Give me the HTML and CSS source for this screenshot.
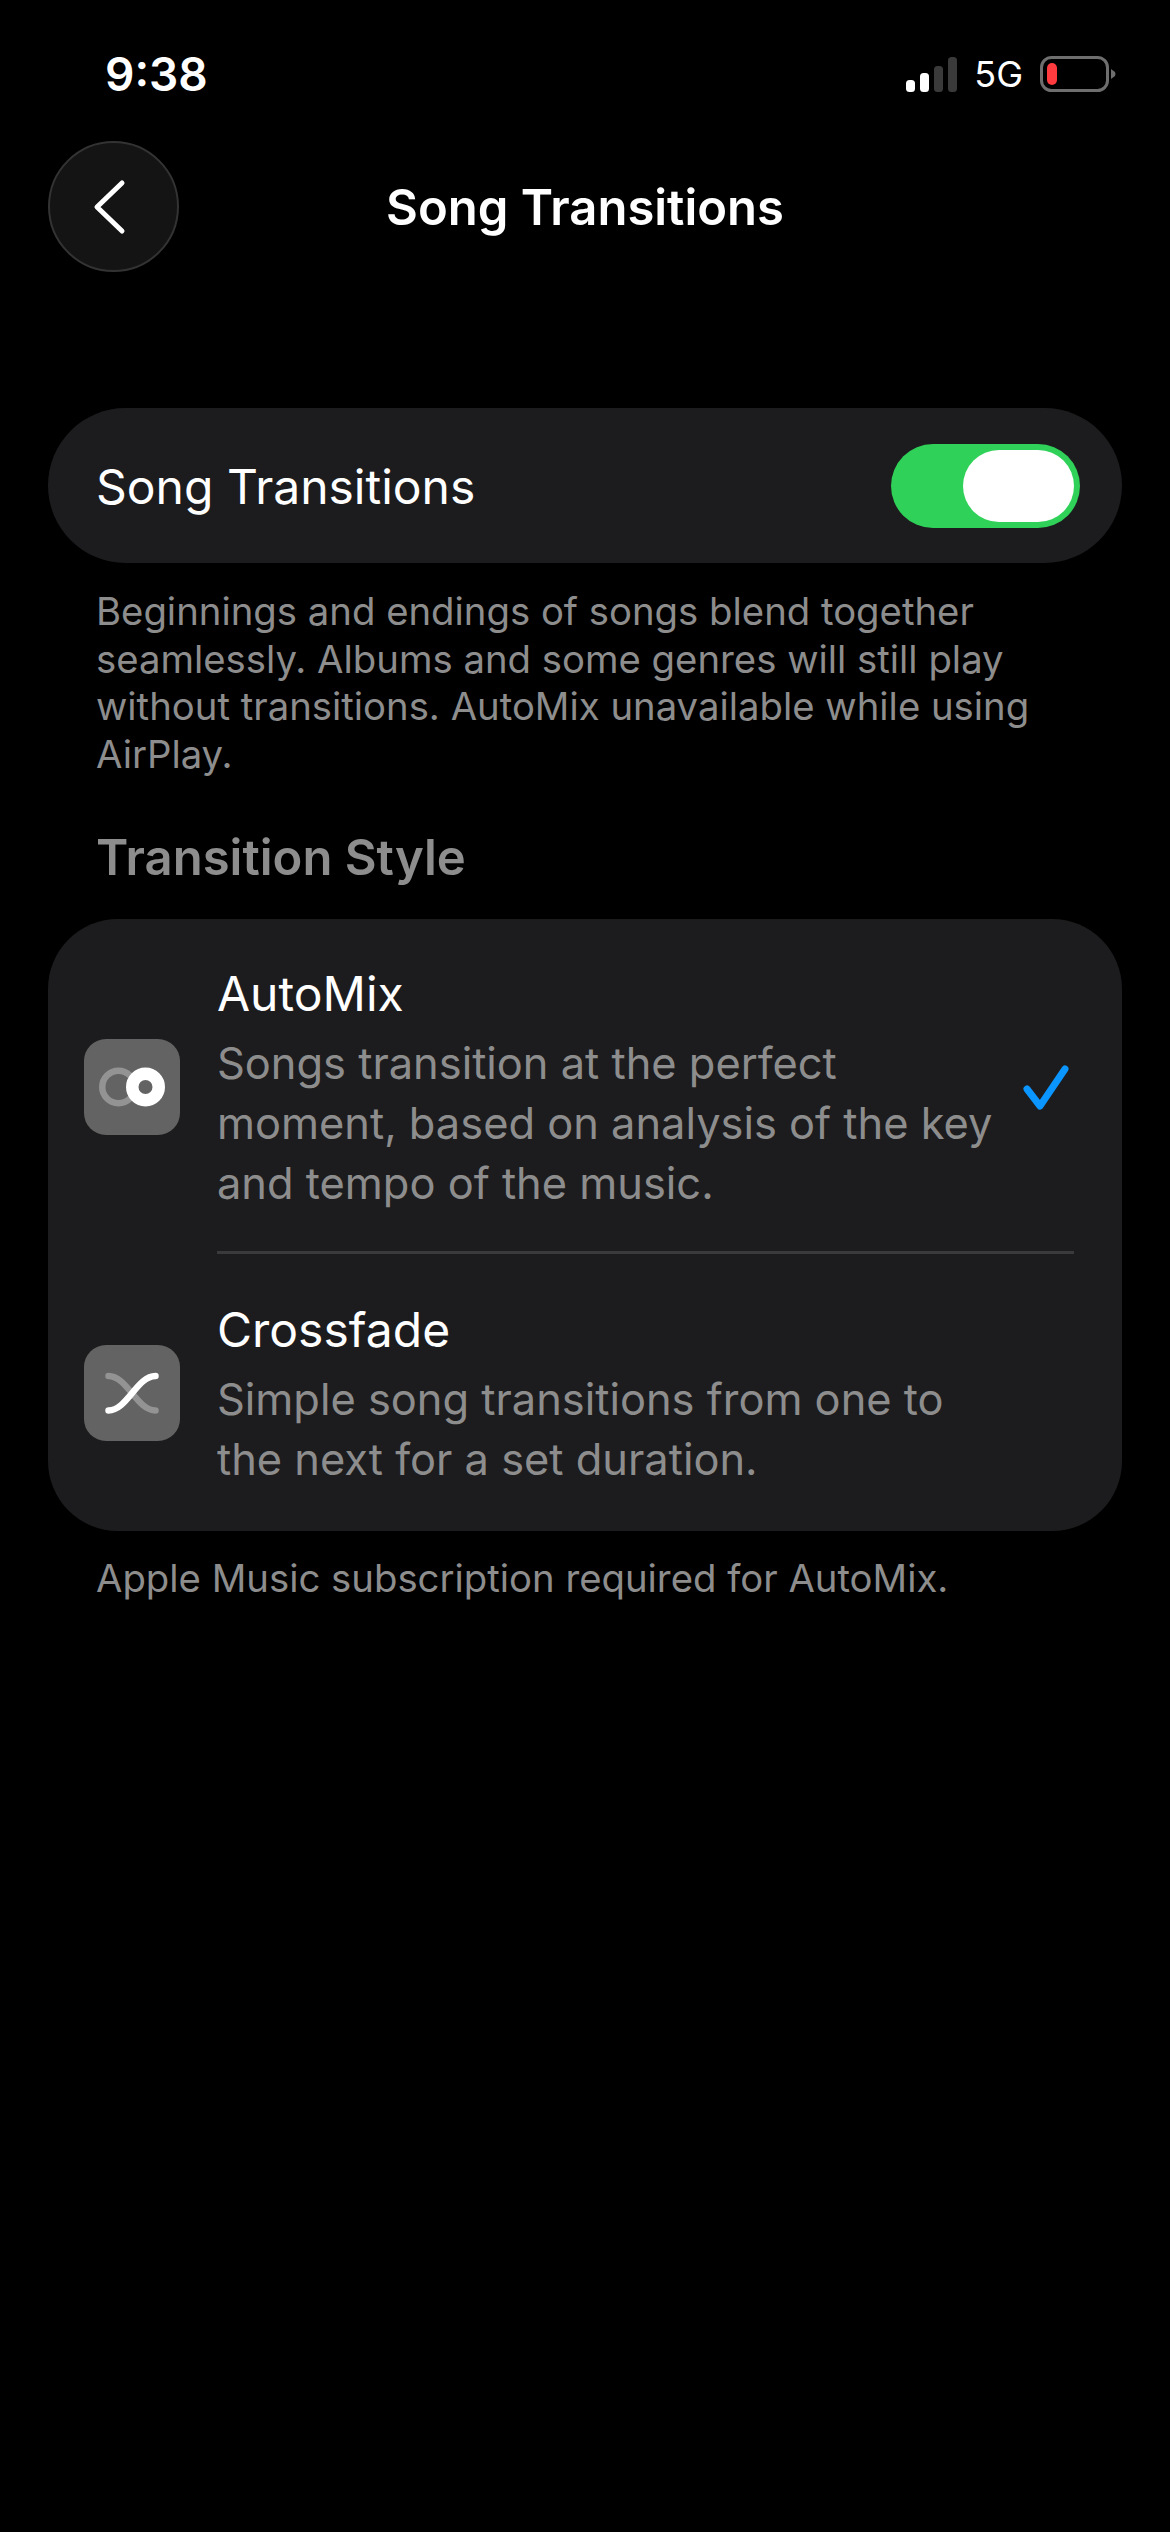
FILE: index.html
```html
<!DOCTYPE html>
<html lang="en">
<head>
    <meta charset="UTF-8">
    <meta name="viewport" content="width=device-width, initial-scale=1.0">
    <title>Song Transitions</title>
    <link rel="stylesheet" href="styles.css">
</head>
<body>

    <div class="status-bar">
        <span class="time">9:38</span>
        <div class="status-right">
            <svg class="signal" width="51" height="35" viewBox="0 0 51 35">
                <rect x="0" y="23" width="9" height="12" rx="3.5" fill="#fff"/>
                <rect x="14" y="16" width="9" height="19" rx="3.5" fill="#fff"/>
                <rect x="28" y="9" width="9" height="26" rx="3.5" fill="#3a3a3a"/>
                <rect x="42" y="0" width="9" height="35" rx="3.5" fill="#3a3a3a"/>
            </svg>
            <span class="network">5G</span>
            <svg class="battery" width="76" height="36" viewBox="0 0 76 36">
                <rect x="1.5" y="1.5" width="66" height="33" rx="10" fill="none" stroke="#6e6e6e" stroke-width="3"/>
                <rect x="7" y="7" width="10" height="22" rx="5" fill="#ff3b40"/>
                <path d="M71 13 L75 16 Q76 18 75 20 L71 23 Z" fill="#6e6e6e"/>
            </svg>
        </div>
    </div>

    <div class="nav-bar">
        <button class="back-btn">
            <svg width="34" height="56" viewBox="0 0 34 56">
                <path d="M29 4 L4 28 L29 52" fill="none" stroke="#fff" stroke-width="5" stroke-linecap="round" stroke-linejoin="round"/>
            </svg>
        </button>
        <h1 class="nav-title">Song Transitions</h1>
    </div>

    <div class="content">
        <div class="toggle-card">
            <span class="toggle-label">Song Transitions</span>
            <div class="toggle">
                <div class="toggle-thumb"></div>
            </div>
        </div>

        <p class="note note-top">Beginnings and endings of songs blend together seamlessly. Albums and some genres will still play without transitions. AutoMix unavailable while using AirPlay.</p>

        <h2 class="section-title">Transition Style</h2>

        <div class="style-card">
            <div class="style-row row-automix">
                <div class="style-icon">
                    <svg width="66" height="42" viewBox="0 0 66 42">
                        <circle cx="19.5" cy="21" r="16.25" fill="none" stroke="#939393" stroke-width="6.5"/>
                        <circle cx="46.5" cy="21" r="13.25" fill="none" stroke="#fff" stroke-width="12.5"/>
                    </svg>
                </div>
                <div class="style-text">
                    <div class="style-name">AutoMix</div>
                    <div class="style-desc">Songs transition at the perfect<br>moment, based on analysis of the key<br>and tempo of the music.</div>
                </div>
                <svg class="check" width="48" height="48" viewBox="0 0 48 48">
                    <path d="M5 24 L18 41 L43 4" fill="none" stroke="#0a95ff" stroke-width="7" stroke-linecap="round" stroke-linejoin="round"/>
                </svg>
            </div>
            <div class="style-row row-crossfade">
                <div class="style-icon">
                    <svg width="54" height="42" viewBox="0 0 54 42">
                        <path d="M3.5 4 C22 4 32 38.5 50.5 38.5" fill="none" stroke="#939393" stroke-width="6.5" stroke-linecap="round"/>
                        <path d="M3.5 38.5 C22 38.5 32 4 50.5 4" fill="none" stroke="#fff" stroke-width="6.5" stroke-linecap="round"/>
                    </svg>
                </div>
                <div class="style-text">
                    <div class="style-name">Crossfade</div>
                    <div class="style-desc">Simple song transitions from one to<br>the next for a set duration.</div>
                </div>
            </div>
        </div>

        <p class="note note-bottom">Apple Music subscription required for AutoMix.</p>
    </div>

</body>
</html>
```

FILE: styles.css
```css
body {
    margin: 0;
    width: 1170px;
    height: 2532px;
    overflow: hidden;
    background: #000;
    color: #fff;
    font-family: Inter, "Liberation Sans", sans-serif;
}

.status-bar {
    height: 141px;
    box-sizing: border-box;
    padding: 49px 54px 0 105px;
    display: flex;
    justify-content: space-between;
    align-items: flex-start;
}

.time {
    font-size: 46px;
    line-height: 50px;
    font-weight: 600;
}

.status-right {
    display: flex;
    align-items: center;
    height: 50px;
}

.signal {
    margin-right: 17px;
}

.network {
    font-size: 36px;
    font-weight: 400;
    margin-right: 17px;
}

.nav-bar {
    position: relative;
    height: 131px;
    padding-left: 48px;
    display: flex;
    align-items: center;
}

.back-btn {
    width: 131px;
    height: 131px;
    padding: 0 8px 0 0;
    border-radius: 50%;
    border: 2px solid #333;
    background: #141414;
    display: flex;
    align-items: center;
    justify-content: center;
}

.nav-title {
    position: absolute;
    left: 0;
    right: 0;
    margin: 0;
    padding-top: 2px;
    text-align: center;
    font-size: 49px;
    font-weight: 600;
}

.content {
    padding: 136px 48px 0;
}

.toggle-card {
    height: 155px;
    box-sizing: border-box;
    padding: 0 42px 0 48px;
    border-radius: 78px;
    background: #1c1c1e;
    display: flex;
    align-items: center;
    justify-content: space-between;
}

.toggle-label {
    font-size: 48px;
    padding-top: 2px;
}

.toggle {
    width: 189px;
    height: 84px;
    box-sizing: border-box;
    padding: 6px;
    border-radius: 42px;
    background: #30d158;
    display: flex;
    justify-content: flex-end;
}

.toggle-thumb {
    width: 111px;
    height: 72px;
    border-radius: 36px;
    background: #fff;
}

.note {
    margin: 0;
    padding: 0 48px;
    font-size: 38.3px;
    line-height: 47.6px;
    color: #8d8d8d;
}

.note-top {
    margin-top: 25px;
}

.section-title {
    margin: 50px 0 0;
    padding: 0 48px;
    font-size: 49px;
    line-height: 60px;
    font-weight: 600;
    color: #8d8d8d;
}

.style-card {
    margin-top: 31px;
    height: 612px;
    border-radius: 70px;
    background: #1c1c1e;
    display: flex;
    flex-direction: column;
    overflow: hidden;
}

.style-row {
    display: flex;
    align-items: center;
    position: relative;
}

.row-automix {
    height: 335px;
}

.row-crossfade {
    height: 277px;
}

/* divider only spans the text column */
.row-automix::after {
    content: "";
    position: absolute;
    left: 169px;
    right: 48px;
    bottom: 0;
    height: 3px;
    background: #3a3a3c;
}

.style-icon {
    width: 96px;
    height: 96px;
    margin: 0 37px 0 36px;
    flex-shrink: 0;
    border-radius: 22px;
    background: #636363;
    display: flex;
    align-items: center;
    justify-content: center;
}

.style-text {
    padding-top: 4px;
}

.style-name {
    font-size: 48px;
    line-height: 60px;
}

.style-desc {
    font-size: 43.4px;
    line-height: 60px;
    color: #8d8d8d;
    margin-top: 9px;
}

.check {
    position: absolute;
    right: 52px;
    top: 146px;
}

.note-bottom {
    margin-top: 24px;
}
```
